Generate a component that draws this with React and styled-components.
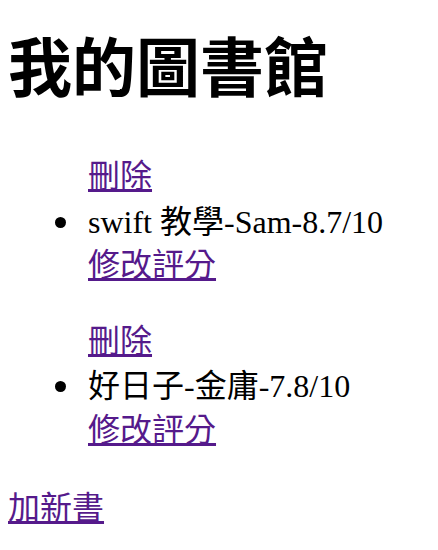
import styled, { createGlobalStyle } from "styled-components";

const GlobalStyle = createGlobalStyle`
  html, body {
    margin: 0;
    padding: 0;
    background: #ffffff;
  }
  body {
    font-family: "Liberation Serif", "Noto Sans CJK TC", serif;
    font-size: 32px;
    line-height: 43.6px;
    color: #000000;
  }
`;

const Page = styled.div`
  padding: 0 8px;
  display: flow-root;
`;

const Title = styled.h1`
  font-size: 64px;
  font-weight: bold;
  line-height: 80px;
  margin: 30px 0 45px;
`;

const BookList = styled.ul`
  margin: 32px 0;
  padding-left: 80px;
  list-style: disc;
`;

// extra padding widens the gap between the bullet and the text
const BookItem = styled.li`
  margin-left: -4px;
  padding-left: 4px;

  &::marker {
    font-size: 38px;
  }
`;

const ActionLink = styled.a`
  display: block;
  width: fit-content;
  color: #551a8b;
  text-decoration: underline;
  cursor: pointer;
`;

const AddLink = styled(ActionLink)`
  margin-top: 34px;
`;

const books = [
  { name: "swift 教學", author: "Sam", score: "8.7" },
  { name: "好日子", author: "金庸", score: "7.8" },
];

const App = () => {
  return (
    <Page>
      <GlobalStyle />
      <Title>我的圖書館</Title>
      {books.map((book) => (
        <BookList key={book.name}>
          <ActionLink href="#">刪除</ActionLink>
          <BookItem>
            {book.name}-{book.author}-{book.score}/10
          </BookItem>
          <ActionLink href="#">修改評分</ActionLink>
        </BookList>
      ))}
      <AddLink href="#">加新書</AddLink>
    </Page>
  );
};

export default App;
